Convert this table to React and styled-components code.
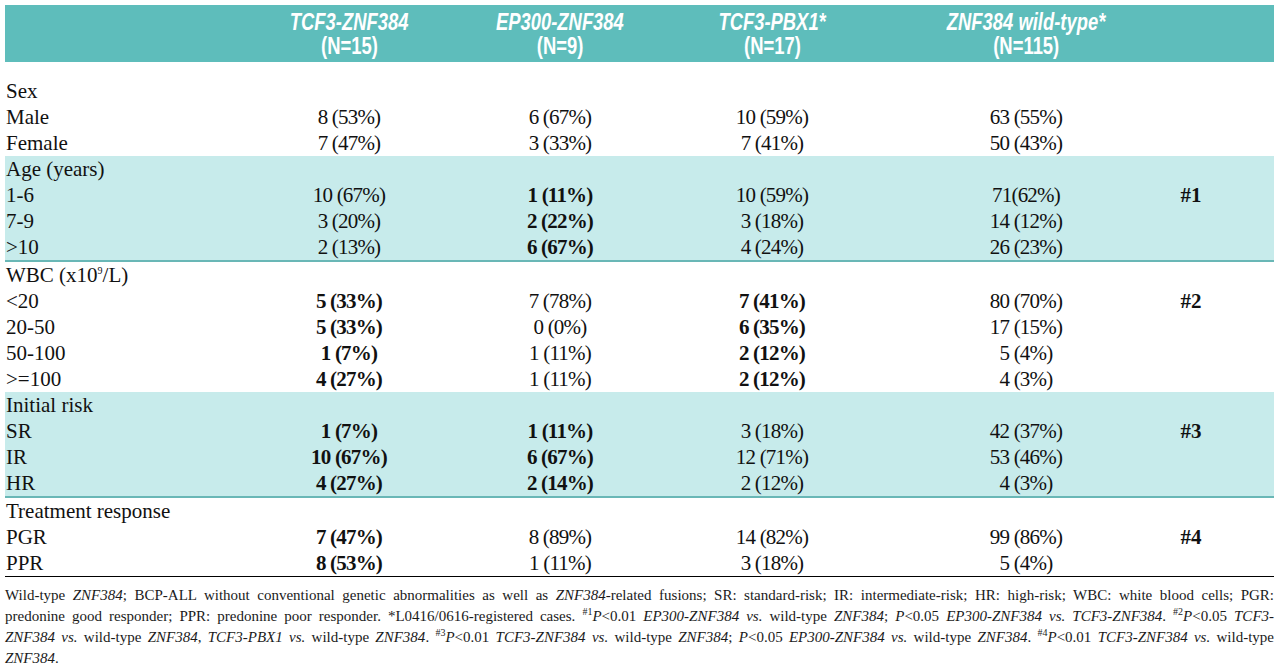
import React from 'react'
import styled, { createGlobalStyle } from 'styled-components'

const GlobalStyle = createGlobalStyle`
  body {
    margin: 0;
    background: #fff;
    color: #111;
  }
`

const COLS = '239px 210px 212px 212px 296px 34px 1fr'

const Page = styled.div`
  width: 1269px;
  padding: 5px 6px 0 5px;
  font-family: "Liberation Serif", "Times New Roman", serif;
`

const HeadBar = styled.div`
  display: grid;
  grid-template-columns: ${COLS};
  align-items: center;
  height: 57px;
  background: #5ebdbb;
`

const HeadCell = styled.div`
  display: flex;
  flex-direction: column;
  align-items: center;
  color: #fff;
  font-family: "Liberation Sans", Arial, sans-serif;
  font-weight: 700;
  font-size: 23px;
  line-height: 24px;
`

// the print face is a heavy condensed sans, squeeze the regular one
const HeadText = styled.span`
  display: inline-block;
  white-space: nowrap;
  transform: scaleX(0.8);
  font-style: ${p => (p.$italic ? 'italic' : 'normal')};
`

const Body = styled.div`
  margin-top: 16px;
`

const Group = styled.div`
  background: ${p => (p.$shade ? '#c7ebeb' : 'transparent')};
  border-bottom: ${p => (p.$shade ? '2px solid #69b7b6' : 'none')};
`

const Row = styled.div`
  display: grid;
  grid-template-columns: ${COLS};
  align-items: center;
  height: 26px;
  font-size: 21px;
  line-height: 26px;
`

const Label = styled.div`
  padding-left: 1px;
  white-space: nowrap;
`

const Value = styled.div`
  text-align: center;
  white-space: nowrap;
  letter-spacing: -0.8px;
  font-weight: ${p => (p.$bold ? 700 : 400)};
`

const Mark = styled.div`
  text-align: center;
  font-weight: 700;
  white-space: nowrap;
`

const Rule = styled.div`
  border-top: 1px solid #000;
`

const Notes = styled.div`
  padding-top: 8px;
  font-size: 15px;
  line-height: 21px;
  color: #1a1a1a;
`

const NoteLine = styled.div`
  white-space: nowrap;
  text-align: ${p => (p.$last ? 'left' : 'justify')};
  text-align-last: ${p => (p.$last ? 'left' : 'justify')};
`

const Sup = styled.sup`
  font-size: 10px;
  line-height: 0;
`

const groups = [
  {
    label: 'Sex',
    rows: [
      ['Male', '8 (53%)', '6 (67%)', '10 (59%)', '63 (55%)'],
      ['Female', '7 (47%)', '3 (33%)', '7 (41%)', '50 (43%)'],
    ],
  },
  {
    label: 'Age (years)',
    shade: true,
    rows: [
      ['1-6', '10 (67%)', '!1 (11%)', '10 (59%)', '71(62%)', '#1'],
      ['7-9', '3 (20%)', '!2 (22%)', '3 (18%)', '14 (12%)'],
      ['>10', '2 (13%)', '!6 (67%)', '4 (24%)', '26 (23%)'],
    ],
  },
  {
    label: <>WBC (x10<Sup>9</Sup>/L)</>,
    rows: [
      ['<20', '!5 (33%)', '7 (78%)', '!7 (41%)', '80 (70%)', '#2'],
      ['20-50', '!5 (33%)', '0 (0%)', '!6 (35%)', '17 (15%)'],
      ['50-100', '!1 (7%)', '1 (11%)', '!2 (12%)', '5 (4%)'],
      ['>=100', '!4 (27%)', '1 (11%)', '!2 (12%)', '4 (3%)'],
    ],
  },
  {
    label: 'Initial risk',
    shade: true,
    rows: [
      ['SR', '!1 (7%)', '!1 (11%)', '3 (18%)', '42 (37%)', '#3'],
      ['IR', '!10 (67%)', '!6 (67%)', '12 (71%)', '53 (46%)'],
      ['HR', '!4 (27%)', '!2 (14%)', '2 (12%)', '4 (3%)'],
    ],
  },
  {
    label: 'Treatment response',
    rows: [
      ['PGR', '!7 (47%)', '8 (89%)', '14 (82%)', '99 (86%)', '#4'],
      ['PPR', '!8 (53%)', '1 (11%)', '3 (18%)', '5 (4%)'],
    ],
  },
]

const heads = [
  ['TCF3-ZNF384', '(N=15)'],
  ['EP300-ZNF384', '(N=9)'],
  ['TCF3-PBX1*', '(N=17)'],
  ['ZNF384 wild-type*', '(N=115)'],
]

const DataRow = ({ cells }) => {
  const [label, ...rest] = cells
  const values = rest.slice(0, 4)
  const mark = rest[4]
  return (
    <Row>
      <Label>{label}</Label>
      {values.map((v, i) => {
        const bold = v.startsWith('!')
        return (
          <Value key={i} $bold={bold}>
            {bold ? v.slice(1) : v}
          </Value>
        )
      })}
      <Mark>{mark}</Mark>
    </Row>
  )
}

const P = () => <i>P</i>

export default function App() {
  return (
    <>
      <GlobalStyle />
      <Page>
        <HeadBar>
          <div />
          {heads.map(([name, n]) => (
            <HeadCell key={name}>
              <HeadText $italic>{name}</HeadText>
              <HeadText>{n}</HeadText>
            </HeadCell>
          ))}
        </HeadBar>

        <Body>
          {groups.map((g, gi) => (
            <Group key={gi} $shade={g.shade}>
              <Row>
                <Label>{g.label}</Label>
              </Row>
              {g.rows.map((r, ri) => (
                <DataRow key={ri} cells={r} />
              ))}
            </Group>
          ))}
        </Body>

        <Rule />

        <Notes>
          <NoteLine>
            Wild-type <i>ZNF384</i>; BCP-ALL without conventional genetic abnormalities as well as{' '}
            <i>ZNF384</i>-related fusions; SR: standard-risk; IR: intermediate-risk; HR: high-risk;
            WBC: white blood cells; PGR:
          </NoteLine>
          <NoteLine>
            predonine good responder; PPR: predonine poor responder. *L0416/0616-registered cases.{' '}
            <Sup>#1</Sup><P />&lt;0.01 <i>EP300-ZNF384 vs.</i> wild-type <i>ZNF384</i>; <P />&lt;0.05{' '}
            <i>EP300-ZNF384 vs. TCF3-ZNF384</i>. <Sup>#2</Sup><P />&lt;0.05 <i>TCF3-</i>
          </NoteLine>
          <NoteLine>
            <i>ZNF384 vs.</i> wild-type <i>ZNF384</i>, <i>TCF3-PBX1 vs.</i> wild-type <i>ZNF384</i>.{' '}
            <Sup>#3</Sup><P />&lt;0.01 <i>TCF3-ZNF384 vs.</i> wild-type <i>ZNF384</i>; <P />&lt;0.05{' '}
            <i>EP300-ZNF384 vs.</i> wild-type <i>ZNF384</i>. <Sup>#4</Sup><P />&lt;0.01{' '}
            <i>TCF3-ZNF384 vs.</i> wild-type
          </NoteLine>
          <NoteLine $last>
            <i>ZNF384</i>.
          </NoteLine>
        </Notes>
      </Page>
    </>
  )
}
